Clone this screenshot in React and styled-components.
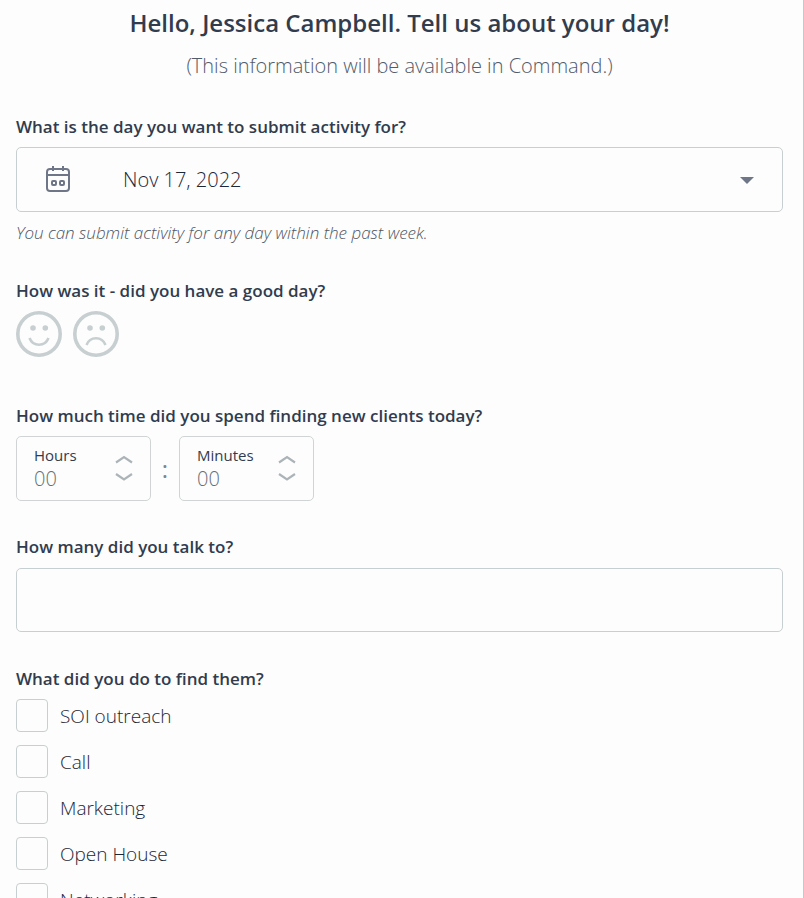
import React, { useState } from 'react'
import styled, { createGlobalStyle } from 'styled-components'

const activities = ['SOI outreach', 'Call', 'Marketing', 'Open House', 'Networking']

const TimeField = ({ id, label }) => {
  const [value, setValue] = useState(0)
  const step = n => setValue(Math.max(0, value + n))

  return (
    <TimeBox>
      <TimeText>
        <TimeLabel htmlFor={id}>{label}</TimeLabel>
        <TimeInput
          id={id}
          inputMode='numeric'
          value={String(value).padStart(2, '0')}
          onChange={e => setValue(Number(e.target.value.replace(/\D/g, '')))}
        />
      </TimeText>
      <Steps>
        <Step type='button' aria-label={`More ${label}`} onClick={() => step(1)}>
          <svg width='18' height='9' viewBox='0 0 18 9'>
            <path d='M1 7.5L9 2L17 7.5' fill='none' stroke='#acb4b8' strokeWidth='2.2' />
          </svg>
        </Step>
        <Step type='button' aria-label={`Fewer ${label}`} onClick={() => step(-1)}>
          <svg width='18' height='9' viewBox='0 0 18 9'>
            <path d='M1 1L9 6.5L17 1' fill='none' stroke='#acb4b8' strokeWidth='2.2' />
          </svg>
        </Step>
      </Steps>
    </TimeBox>
  )
}

const Face = ({ mouth }) => (
  <svg width='46' height='46' viewBox='0 0 46 46' fill='none' stroke='#c8cfd0'>
    <circle cx='23' cy='23' r='21.2' strokeWidth='3.6' />
    <circle cx='17' cy='17' r='2.8' fill='#c8cfd0' stroke='none' />
    <circle cx='29.3' cy='17' r='2.8' fill='#c8cfd0' stroke='none' />
    <path d={mouth} strokeWidth='2.6' />
  </svg>
)

export default () => (
  <Panel>
    <GlobalStyle />
    <Title>Hello, Jessica Campbell. Tell us about your day!</Title>
    <Subtitle>(This information will be available in Command.)</Subtitle>

    <Field $space={34}>
      <Label htmlFor='day'>What is the day you want to submit activity for?</Label>
      <DateBox>
        <CalendarIcon width='26' height='28' viewBox='0 0 26 28' fill='none' stroke='#6f7688' strokeWidth='2'>
          <rect x='2' y='4' width='22' height='22' rx='3' />
          <path d='M2 10H24M8 1V6M18 1V6' />
          <rect x='7' y='16' width='4' height='4' rx='1' />
          <rect x='15' y='16' width='4' height='4' rx='1' />
        </CalendarIcon>
        <DateSelect id='day' defaultValue='Nov 17, 2022'>
          <option>Nov 17, 2022</option>
        </DateSelect>
        <Caret width='14' height='8' viewBox='0 0 14 8'>
          <path d='M0 0H14L7 7Z' fill='#6f7688' />
        </Caret>
      </DateBox>
      <Hint>You can submit activity for any day within the past week.</Hint>
    </Field>

    <Field as='fieldset' $space={47}>
      <Label as='legend'>How was it - did you have a good day?</Label>
      <Faces>
        <FaceButton type='button' aria-label='Good day'>
          <Face mouth='M13.5 27C17 36 29 36 32.5 27' />
        </FaceButton>
        <FaceButton type='button' aria-label='Bad day'>
          <Face mouth='M13.5 34C17 25 29 25 32.5 34' />
        </FaceButton>
      </Faces>
    </Field>

    <Field as='fieldset' $space={34}>
      <Label as='legend'>How much time did you spend finding new clients today?</Label>
      <Times>
        <TimeField id='hours' label='Hours' />
        <Colon>:</Colon>
        <TimeField id='minutes' label='Minutes' />
      </Times>
    </Field>

    <Field $space={35}>
      <Label htmlFor='talked'>How many did you talk to?</Label>
      <TextInput id='talked' />
    </Field>

    <Field as='fieldset' $space={32}>
      <Label as='legend'>What did you do to find them?</Label>
      <Checks>
        {activities.map(name => (
          <CheckRow key={name}>
            <Checkbox type='checkbox' />
            <CheckText>{name}</CheckText>
          </CheckRow>
        ))}
      </Checks>
    </Field>
  </Panel>
)

const GlobalStyle = createGlobalStyle`
  * {
    box-sizing: border-box;
  }

  body {
    margin: 0;
    background: #fdfdfd;
    color: #313c4e;
    font-family: 'Open Sans', 'Noto Sans', sans-serif;
  }

  button,
  input,
  select {
    font-family: inherit;
    color: inherit;
  }
`

const Panel = styled.form`
  height: 100vh;
  padding: 7px 20px 0 16px;
  border-right: 1px solid #c4c8ca;
  overflow-y: auto;
  scrollbar-width: none;
`

const Title = styled.h1`
  margin: 0 0 11px;
  font-size: 24px;
  line-height: 32px;
  font-weight: 600;
  text-align: center;
`

const Subtitle = styled.p`
  margin: 0 0 33px;
  font-size: 20px;
  line-height: 32px;
  font-weight: 300;
  text-align: center;
  color: #525b69;
`

const Field = styled.div`
  min-width: 0;
  margin: 0 0 ${props => props.$space}px;
  padding: 0;
  border: 0;
`

const Label = styled.label`
  display: block;
  margin-bottom: 8px;
  padding: 0;
  font-size: 17px;
  line-height: 24px;
  font-weight: 600;
`

const DateBox = styled.div`
  display: grid;
  align-items: center;
  height: 65px;
`

const DateSelect = styled.select`
  grid-area: 1 / 1;
  width: 100%;
  height: 65px;
  padding: 0 60px 0 106px;
  appearance: none;
  background: transparent;
  border: 1px solid #c8cfd0;
  border-radius: 5px;
  font-size: 20px;
  font-weight: 300;
  color: #1c2738;
`

const CalendarIcon = styled.svg`
  grid-area: 1 / 1;
  margin: 0 0 2px 29px;
  pointer-events: none;
`

const Caret = styled.svg`
  grid-area: 1 / 1;
  justify-self: end;
  margin: 2px 29px 0 0;
  pointer-events: none;
`

const Hint = styled.p`
  margin: 9px 0 0;
  font-size: 17px;
  line-height: 24px;
  font-style: italic;
  font-weight: 300;
  color: #4e5765;
`

const Faces = styled.div`
  display: flex;
  gap: 11px;
`

const FaceButton = styled.button`
  display: flex;
  padding: 0;
  background: none;
  border: 0;
  border-radius: 50%;
  cursor: pointer;
`

const Times = styled.div`
  display: flex;
  align-items: center;
`

const TimeBox = styled.div`
  display: flex;
  align-items: center;
  justify-content: space-between;
  width: 135px;
  height: 65px;
  padding: 0 17px;
  border: 1px solid #d0d4d5;
  border-radius: 5px;
`

const TimeText = styled.div`
  display: flex;
  flex-direction: column;
  margin-bottom: 4px;
`

const TimeLabel = styled.label`
  font-size: 15px;
  line-height: 24px;
`

const TimeInput = styled.input`
  width: 60px;
  height: 24px;
  padding: 0;
  background: none;
  border: 0;
  font-size: 20px;
  font-weight: 300;
  color: #667075;
`

const Steps = styled.div`
  display: flex;
  flex-direction: column;
  gap: 9px;
`

const Step = styled.button`
  display: flex;
  padding: 0;
  background: none;
  border: 0;
  cursor: pointer;
`

const Colon = styled.span`
  width: 28px;
  text-align: center;
  font-size: 24px;
  color: #7d878c;
`

const TextInput = styled.input`
  display: block;
  width: 100%;
  height: 64px;
  margin-top: 9px;
  padding: 0 17px;
  background: transparent;
  border: 1px solid #c8cfd0;
  border-radius: 5px;
  font-size: 19px;
`

const Checks = styled.div`
  display: flex;
  flex-direction: column;
  align-items: flex-start;
  gap: 13px;
`

const CheckRow = styled.label`
  display: flex;
  align-items: center;
  gap: 12px;
  height: 33px;
`

const CheckText = styled.span`
  padding-top: 2px;
  font-size: 19px;
  line-height: 31px;
  font-weight: 300;
  color: #1c2738;
`

const Checkbox = styled.input`
  width: 32px;
  height: 33px;
  margin: 0;
  appearance: none;
  border: 1px solid #c8cfd0;
  border-radius: 4px;

  &:checked {
    background: #6f7688;
  }
`
